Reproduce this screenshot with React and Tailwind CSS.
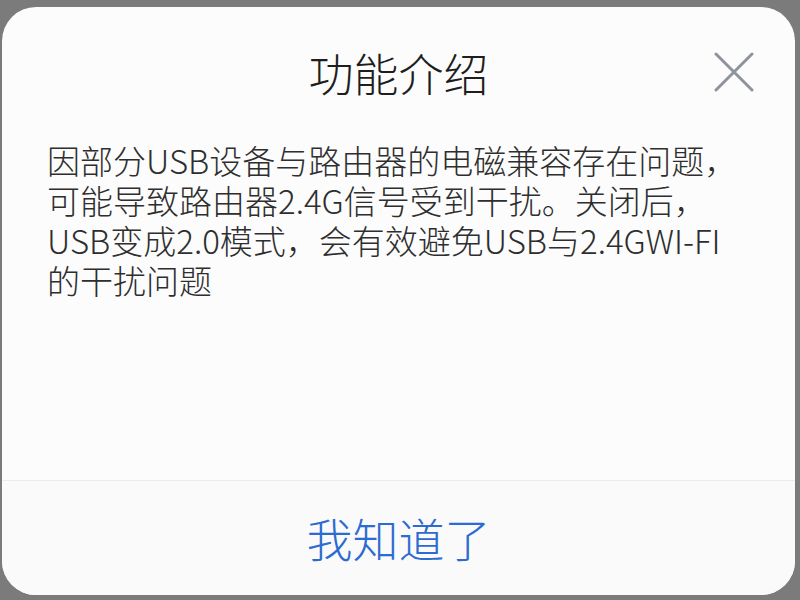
import React from "react";

const font = { fontFamily: '"Noto Sans CJK SC", "Noto Sans", sans-serif' };

const lines = [
  "因部分USB设备与路由器的电磁兼容存在问题，",
  "可能导致路由器2.4G信号受到干扰。关闭后，",
  "USB变成2.0模式，会有效避免USB与2.4GWI-FI",
  "的干扰问题",
];

function CloseIcon() {
  return (
    <svg width="40" height="40" viewBox="0 0 40 40" fill="none">
      <path
        d="M2 2 L38 38 M38 2 L2 38"
        stroke="#8d949c"
        strokeWidth="3"
        strokeLinecap="round"
      />
    </svg>
  );
}

export default function App() {
  return (
    <div className="h-[600px] w-[800px] overflow-hidden bg-[#7b7b7b] pt-[7px] pl-[2px]" style={font}>
      <div className="flex h-[588px] w-[793px] flex-col rounded-[34px] bg-[#fcfcfc]">
        <div className="relative flex h-[130px] shrink-0 items-center justify-center">
          <h1 className="text-[45px] font-light leading-none text-[#1e1e1e]">功能介绍</h1>
          <button className="absolute right-[41px] top-[45px]">
            <CloseIcon />
          </button>
        </div>

        <div className="flex flex-1 flex-col pl-[45px] pt-[3px]">
          {lines.map((l) => (
            <span key={l} className="block h-[40px] whitespace-nowrap text-[33px] font-light leading-[40px] text-[#2e2e2e]">
              {l}
            </span>
          ))}
        </div>

        <div className="flex h-[115px] shrink-0 items-center justify-center rounded-b-[34px] border-t border-[#ececec] bg-[#fafafa]">
          <button className="pb-[2px] text-[46px] font-light leading-none text-[#2c6bd1]">我知道了</button>
        </div>
      </div>
    </div>
  );
}
